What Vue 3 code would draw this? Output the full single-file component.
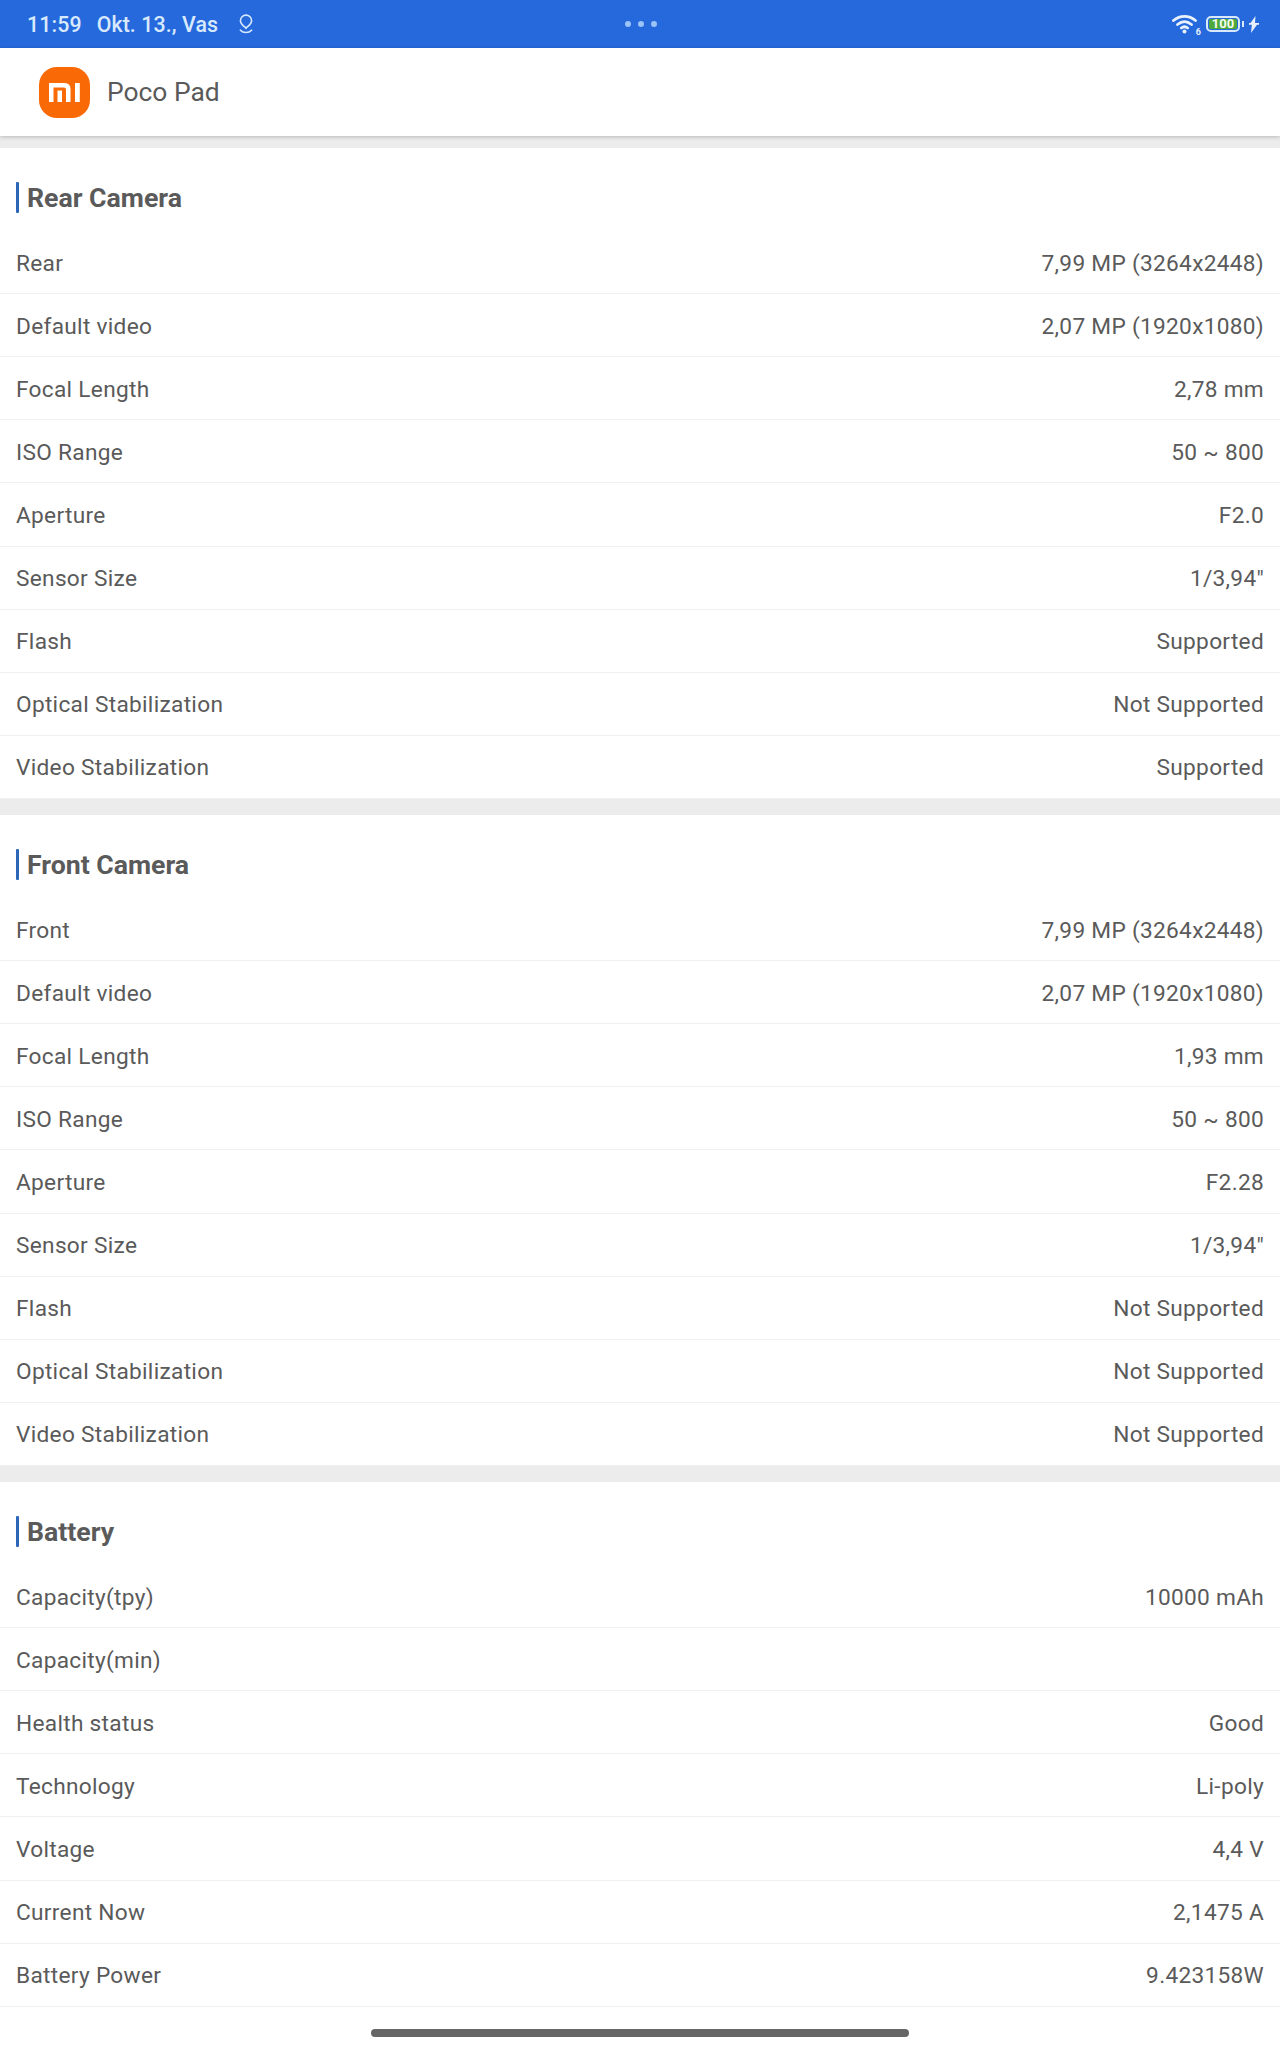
<template>
  <div class="page">
    <div class="status-bar">
      <div class="status-left">
        <span class="clock">11:59</span>
        <span class="date">Okt. 13., Vas</span>
        <svg class="alarm" width="16" height="20" viewBox="0 0 16 20" fill="none" stroke="currentColor" stroke-width="1.6" stroke-linecap="round">
          <path d="M8 14.2c-1.2-1.4-5.6-3.9-5.6-7.5a5.6 5.6 0 0 1 11.2 0c0 3.6-4.4 6.1-5.6 7.5z"/>
          <path d="M2.4 16.2c1.4 1.5 3.4 2.3 5.6 2.3s4.2-.8 5.600-2.300"/>
        </svg>
      </div>
      <div class="status-dots"><i></i><i></i><i></i></div>
      <div class="status-right">
        <span class="wifi">
          <svg width="26" height="20" viewBox="0 0 26 20" fill="none" stroke="#e8f1fd" stroke-width="2.8" stroke-linecap="round">
            <path d="M1.500 6.500C8 1 17 1 23.500 6.500"/>
            <path d="M5.500 10.500C10 6.800 15 6.800 19.500 10.500"/>
            <path d="M9.300 14C11.300 12.400 13.700 12.400 15.700 14"/>
            <circle cx="12.500" cy="17.500" r="2" fill="#e8f1fd" stroke="none"/>
          </svg>
          <span class="wifi-six">6</span>
        </span>
        <span class="battery">
          <span class="battery-level">100</span>
        </span>
        <span class="battery-tip"></span>
        <svg class="bolt" width="10" height="17" viewBox="0 0 10 17" fill="#e8f1fd">
          <path d="M6.500 0 1.500 7H0v1.800h2.800L2 17l6-8.200h2V7H6z"/>
        </svg>
      </div>
    </div>

    <header class="app-header">
      <div class="logo">
        <svg width="31" height="19" viewBox="0 0 31 19" fill="none">
          <path d="M0 0h16a5.500 5.500 0 0 1 5.500 5.500V19H17V6.500a2 2 0 0 0-2-2H4.500V19H0z" fill="#fff"/>
          <rect x="8.500" y="7.500" width="4.500" height="11.500" fill="#fff"/>
          <rect x="26" y="0" width="4.800" height="19" fill="#fff"/>
        </svg>
      </div>
      <span class="app-title">Poco Pad</span>
    </header>

    <section v-for="section in sections" :key="section.title" class="section">
      <h2 class="section-title">{{ section.title }}</h2>
      <div v-for="row in section.rows" :key="row[0]" class="row">
        <span>{{ row[0] }}</span>
        <span>{{ row[1] }}</span>
      </div>
    </section>

    <div class="home-bar"></div>
  </div>
</template>

<script setup>
const sections = [
  {
    title: 'Rear Camera',
    rows: [
      ['Rear', '7,99 MP (3264x2448)'],
      ['Default video', '2,07 MP (1920x1080)'],
      ['Focal Length', '2,78 mm'],
      ['ISO Range', '50 ~ 800'],
      ['Aperture', 'F2.0'],
      ['Sensor Size', '1/3,94"'],
      ['Flash', 'Supported'],
      ['Optical Stabilization', 'Not Supported'],
      ['Video Stabilization', 'Supported']
    ]
  },
  {
    title: 'Front Camera',
    rows: [
      ['Front', '7,99 MP (3264x2448)'],
      ['Default video', '2,07 MP (1920x1080)'],
      ['Focal Length', '1,93 mm'],
      ['ISO Range', '50 ~ 800'],
      ['Aperture', 'F2.28'],
      ['Sensor Size', '1/3,94"'],
      ['Flash', 'Not Supported'],
      ['Optical Stabilization', 'Not Supported'],
      ['Video Stabilization', 'Not Supported']
    ]
  },
  {
    title: 'Battery',
    rows: [
      ['Capacity(tpy)', '10000 mAh'],
      ['Capacity(min)', ''],
      ['Health status', 'Good'],
      ['Technology', 'Li-poly'],
      ['Voltage', '4,4 V'],
      ['Current Now', '2,1475 A'],
      ['Battery Power', '9.423158W']
    ]
  }
]
</script>

<style>
html,
body {
  margin: 0;
  background: #fff;
}
</style>

<style scoped>
.page {
  position: relative;
  width: 1280px;
  height: 2048px;
  overflow: hidden;
  background: #fff;
  font-family: Roboto, sans-serif;
  color: #5a5a5a;
}

.status-bar {
  display: grid;
  grid-template-columns: 1fr auto 1fr;
  align-items: center;
  height: 48px;
  padding: 0 21px 0 27px;
  background: #2569dc;
  color: #d9e9fd;
}

.status-left {
  display: flex;
  align-items: center;
  font-size: 21.33px;
  font-weight: 500;
  letter-spacing: 0.1px;
}

.date {
  margin-left: 15px;
}

.alarm {
  margin-left: 20px;
}

.status-dots {
  display: flex;
  gap: 7px;
  margin-left: -5px;
}

.status-dots i {
  width: 6px;
  height: 6px;
  border-radius: 50%;
  background: #9cc3f7;
}

.status-right {
  display: flex;
  align-items: center;
  justify-content: flex-end;
}

.wifi {
  position: relative;
  display: flex;
  width: 27px;
}

.wifi-six {
  position: absolute;
  right: -2px;
  bottom: -3px;
  font-size: 9px;
  font-weight: 700;
  color: #e8f1fd;
}

.battery {
  display: flex;
  align-items: center;
  box-sizing: border-box;
  width: 34px;
  height: 16px;
  margin-left: 7px;
  padding: 1px;
  border: 2px solid #d9e9fd;
  border-radius: 5px;
}

.battery-level {
  flex: 1;
  border-radius: 2px;
  background: #4fa93a;
  color: #f4fdf0;
  font-size: 13px;
  font-weight: 700;
  line-height: 10px;
  text-align: center;
}

.battery-tip {
  width: 2px;
  height: 6px;
  margin-left: 2px;
  background: #d9e9fd;
}

.bolt {
  margin-left: 5px;
}

.app-header {
  position: relative;
  display: flex;
  align-items: center;
  height: 88px;
  padding-left: 39px;
  box-shadow: 0 1px 4px rgba(0, 0, 0, 0.22);
}

.logo {
  display: flex;
  align-items: center;
  justify-content: center;
  width: 51px;
  height: 51px;
  border-radius: 18px;
  background: #f96a06;
}

.app-title {
  margin-left: 17px;
  font-size: 26.4px;
}

.section {
  border-top: 16px solid #ececec;
}

.section:first-of-type {
  border-top-width: 12px;
}

.section-title {
  position: relative;
  height: 83px;
  margin: 0;
  padding-left: 27px;
  font-size: 26.67px;
  font-weight: 700;
  line-height: 101px;
}

.section-title::before {
  content: '';
  position: absolute;
  top: 34px;
  left: 16px;
  width: 3px;
  height: 31px;
  border-radius: 1px;
  background: #2b66b8;
}

.row {
  display: flex;
  align-items: center;
  justify-content: space-between;
  box-sizing: border-box;
  height: 63.11px;
  padding: 2px 16px 0;
  border-bottom: 1px solid #f0f0f0;
  font-size: 22.67px;
  letter-spacing: 0.3px;
}

.home-bar {
  position: absolute;
  left: 371px;
  bottom: 11px;
  width: 538px;
  height: 8px;
  border-radius: 4px;
  background: #666;
}
</style>
